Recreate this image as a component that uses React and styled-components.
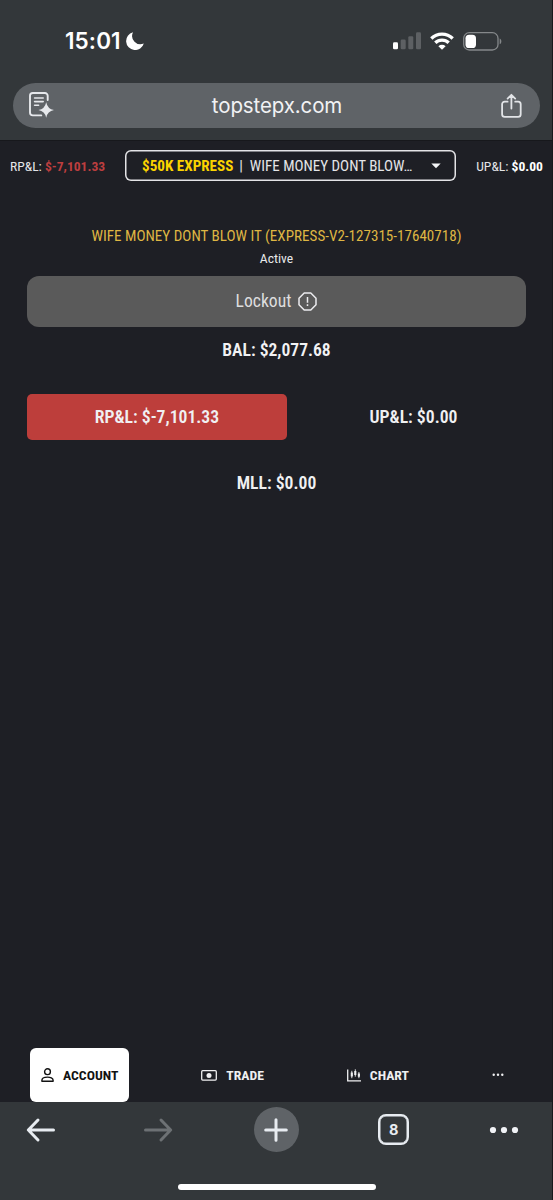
import React, { useState } from 'react'
import styled, { createGlobalStyle } from 'styled-components'

const GlobalStyle = createGlobalStyle`
  * { box-sizing: border-box; }
  body { margin: 0; background: #1e1f25; }
  button { font: inherit; color: inherit; background: none; border: 0; padding: 0; margin: 0; display: flex; align-items: center; }
  svg { display: block; flex: none; }
`

const account = {
  plan: '$50K EXPRESS',
  name: 'WIFE MONEY DONT BLOW IT',
  id: 'EXPRESS-V2-127315-17640718',
  status: 'Active',
  bal: '$2,077.68',
  rpl: '$-7,101.33',
  upl: '$0.00',
  mll: '$0.00'
}

// Long account names don't fit in the select.
const shorten = (name, max = 20) => (name.length > max ? name.slice(0, max) + '…' : name)

// Status bar icons
const MoonIcon = () => (
  <svg width="18" height="18" viewBox="0 0 18 18" fill="#fff">
    <path d="M7 0.3A9 9 0 1 0 17.800 11.500A8.300 8.300 0 0 1 7 0.300Z" />
  </svg>
)
const SignalIcon = () => (
  <svg width="28" height="18" viewBox="0 0 28 18" fill="#5d6063">
    <rect x="0" y="10.300" width="5" height="7" rx="1.300" fill="#fff" />
    <rect x="7.700" y="7.500" width="5" height="9.800" rx="1.300" />
    <rect x="15.300" y="4.200" width="5" height="13.100" rx="1.300" />
    <rect x="23" y="0.300" width="5" height="17" rx="1.300" />
  </svg>
)
const WifiIcon = () => (
  <svg width="24" height="18" viewBox="0 0 24 18" fill="none" stroke="#fff" strokeWidth="3.300">
    <path d="M1.300 6.500a15.300 15.300 0 0 1 21.400 0" />
    <path d="M5.300 10.800a9.600 9.600 0 0 1 13.400 0" />
    <path d="M12 17.800l-3.600-3.600a5.300 5.300 0 0 1 7.200 0z" fill="#fff" stroke="none" />
  </svg>
)
const BatteryIcon = () => (
  <svg width="39" height="19" viewBox="0 0 39 19">
    <rect x="0.700" y="0.700" width="34.300" height="17.300" rx="5.600" fill="none" stroke="#85888a" strokeWidth="1.300" />
    <rect x="2.500" y="2.700" width="10.500" height="13.300" rx="3.600" fill="#fff" />
    <path d="M36.700 6.500c2.200.8 2.200 5 0 5.800z" fill="#85888a" />
  </svg>
)

// Browser icons
const ReaderIcon = () => (
  <svg width="26" height="27" viewBox="0 0 26 27" fill="none" stroke="#e6e8ec" strokeWidth="1.900" strokeLinecap="round">
    <path d="M18.700 8V3.800a2.800 2.800 0 0 0-2.800-2.800H3.800A2.800 2.800 0 0 0 1 3.800v16.800a2.800 2.800 0 0 0 2.800 2.800h8.500" />
    <path d="M5.600 6h8.600M5.600 9.600h8.600M5.600 13.300h4" strokeWidth="1.600" />
    <path d="M17.200 10.300q1.300 6.700 7.800 7.800-6.500 1.100-7.800 7.700-1.300-6.600-7.800-7.700 6.500-1.100 7.800-7.800z" fill="#e6e8ec" stroke="none" />
  </svg>
)
const ShareIcon = () => (
  <svg width="21" height="26" viewBox="0 0 21 26" fill="none" stroke="#e2e4e7" strokeWidth="1.800" strokeLinecap="round" strokeLinejoin="round">
    <path d="M6.600 8.700H3.700A2.600 2.600 0 0 0 1.100 11.300v10a2.600 2.600 0 0 0 2.600 2.600h13.400a2.600 2.600 0 0 0 2.600-2.600v-10a2.600 2.600 0 0 0-2.600-2.600h-2.900M10.400 15.500V2M6.600 5.600l3.800-3.800 3.800 3.800" />
  </svg>
)
const ArrowIcon = ({ forward }) => (
  <svg width="30" height="26" viewBox="0 0 30 26" fill="none" stroke={forward ? '#6d7174' : '#e8ecf1'} strokeWidth="3" strokeLinecap="round" strokeLinejoin="round">
    <path d={forward ? 'M2.500 13h25M18 3l9.700 10L18 23' : 'M27.500 13h-25M12 3L2.300 13 12 23'} />
  </svg>
)
const PlusIcon = () => (
  <svg width="24" height="24" viewBox="0 0 24 24" stroke="#e8ecf1" strokeWidth="3" strokeLinecap="round">
    <path d="M1.700 12h20.600M12 1.700v20.600" />
  </svg>
)
const MoreIcon = () => (
  <svg width="30" height="8" viewBox="0 0 30 8" fill="#f1f3f6">
    <circle cx="4" cy="4" r="3.100" /><circle cx="15" cy="4" r="3.100" /><circle cx="26" cy="4" r="3.100" />
  </svg>
)

// Platform icons
const CaretIcon = () => (
  <svg width="10" height="6" viewBox="0 0 10 6" fill="#f4f5f7"><path d="M0.300 0.500h9.400L5 5.300z" /></svg>
)
const AlertIcon = () => (
  <svg width="19" height="19" viewBox="0 0 19 19" fill="none" stroke="#ececef" strokeWidth="1.500" strokeLinejoin="round">
    <path d="M6.200 1h6.600L18 6.200v6.600L12.800 18H6.200L1 12.800V6.200z" />
    <path d="M9.500 5v5.700M9.500 12.300v1.800" />
  </svg>
)
const PersonIcon = () => (
  <svg width="13" height="14" viewBox="0 0 13 14" fill="none" stroke="currentColor" strokeWidth="1.400">
    <circle cx="6.500" cy="3.700" r="2.900" />
    <path d="M0.900 13.200v-0.900c0-4.200 11.200-4.200 11.200 0v0.900z" strokeLinejoin="round" />
  </svg>
)
const CashIcon = () => (
  <svg width="16" height="11" viewBox="0 0 16 11" fill="none" stroke="currentColor" strokeWidth="1.300">
    <rect x="0.700" y="0.700" width="14.600" height="9.400" rx="1" />
    <circle cx="8" cy="5.400" r="2.500" fill="currentColor" stroke="none" />
  </svg>
)
const CandlesIcon = () => (
  <svg width="14" height="13" viewBox="0 0 14 13" fill="none" stroke="currentColor">
    <path d="M0.700 0.500v11.400H14" strokeWidth="1.300" />
    <path d="M4.800 1.800v7.400M8.300 0.300v7.400M11.900 3v6.200" strokeWidth="0.900" />
    <path d="M4.800 3.500v4M8.300 2v4M11.900 4.500v3.200" strokeWidth="2.100" />
  </svg>
)
const DotsIcon = () => (
  <svg width="12" height="4" viewBox="0 0 12 4" fill="currentColor">
    <circle cx="1.700" cy="1.700" r="1.200" /><circle cx="6" cy="1.700" r="1.200" /><circle cx="10.300" cy="1.700" r="1.200" />
  </svg>
)

const tabs = [
  { label: 'ACCOUNT', icon: PersonIcon },
  { label: 'TRADE', icon: CashIcon },
  { label: 'CHART', icon: CandlesIcon },
  { label: '', icon: DotsIcon }
]

const App = () => {
  const [active, setActive] = useState('ACCOUNT')

  return (
    <Screen>
      <GlobalStyle />
      <BrowserTop>
        <StatusBar>
          <Time>15:01</Time>
          <MoonIcon />
          <StatusIcons><SignalIcon /><WifiIcon /><BatteryIcon /></StatusIcons>
        </StatusBar>
        <AddressBar>
          <ReaderIcon />
          <Address>topstepx.com</Address>
          <ShareIcon />
        </AddressBar>
      </BrowserTop>
      <Platform>
        <Header>
          <Pnl>RP&amp;L: <PnlValue $loss>{account.rpl}</PnlValue></Pnl>
          <AccountSelect>
            <Plan>{account.plan}</Plan>
            <AccountName>| &nbsp;{shorten(account.name)}</AccountName>
            <CaretIcon />
          </AccountSelect>
          <Pnl>UP&amp;L: <PnlValue>{account.upl}</PnlValue></Pnl>
        </Header>
        <Main>
          <Title>{account.name} ({account.id})</Title>
          <Status>{account.status}</Status>
          <Lockout>Lockout <AlertIcon /></Lockout>
          <Balance>BAL: {account.bal}</Balance>
          <StatRow>
            <Stat $loss>RP&amp;L: {account.rpl}</Stat>
            <Stat>UP&amp;L: {account.upl}</Stat>
          </StatRow>
          <Stat>MLL: {account.mll}</Stat>
        </Main>
        <TabBar>
          {tabs.map(({ label, icon: Icon }) => (
            <Tab key={label} $active={active === label} onClick={() => setActive(label)}>
              <Icon />{label && <span>{label}</span>}
            </Tab>
          ))}
        </TabBar>
      </Platform>
      <BrowserBottom>
        <NavRow>
          <NavButton><ArrowIcon /></NavButton>
          <NavButton><ArrowIcon forward /></NavButton>
          <NavButton $round><PlusIcon /></NavButton>
          <NavButton><TabCount>8</TabCount></NavButton>
          <button><MoreIcon /></button>
        </NavRow>
        <HomeIndicator />
      </BrowserBottom>
    </Screen>
  )
}

const Screen = styled.div`
  width: 553px; height: 1200px; display: flex; flex-direction: column; border-right: 1px solid #17191c;
  font-family: Inter, "Liberation Sans", sans-serif; color: #fff; overflow: hidden;`

// Browser chrome, top
const BrowserTop = styled.header`height: 140px; background: #33373a;`
const StatusBar = styled.div`
  height: 83px; padding: 0 50px 1px 65px; display: flex; align-items: center;`
const Time = styled.span`font-size: 22.500px; font-weight: 600; width: 61px; letter-spacing: 0.1px; padding-bottom: 1px;`
const StatusIcons = styled.div`margin-left: auto; display: flex; align-items: center; gap: 9px;`
const AddressBar = styled.div`
  height: 45px; margin: 0 12px 0 13px; padding: 0 18px 0 16px; border-radius: 23px; background: #5f6367;
  display: flex; align-items: center; justify-content: space-between;`
const Address = styled.span`font-size: 20.500px; letter-spacing: -0.120px; color: #f1f2f4; padding-right: 2px;`

// Trading platform
const Platform = styled.div`
  flex: 1; min-height: 0; display: flex; flex-direction: column; background: #1e1f25;
  font-family: "Roboto Condensed", Roboto, sans-serif; font-stretch: 75%; border-top: 1px solid #17181c;`
const Header = styled.div`
  height: 50px; padding: 0 9px 1px 10px; display: flex; align-items: center; justify-content: space-between;`
const Pnl = styled.span`font-size: 13.600px; width: 96px; color: #e4e5e8; white-space: nowrap; &:last-child { width: auto; }`
const PnlValue = styled.b`color: ${p => (p.$loss ? '#bd3e3f' : '#fff')};`
const AccountSelect = styled.button`
  && { width: 331px; height: 31px; padding: 0 15px 0 17px; margin-left: -1px; border-radius: 6px;
  box-shadow: inset 0 0 0 1.500px #e4e4e7; }`
const Plan = styled.b`color: #fbd300; font-size: 15.100px; margin-right: 6px; white-space: nowrap;`
const AccountName = styled.span`
  font-size: 15px; color: #e4e5e8; margin-right: auto; white-space: nowrap;`
const Main = styled.main`
  flex: 1; padding: 34px 26px 0 27px; display: flex; flex-direction: column; align-items: center;`
const Title = styled.h1`margin: 0; font-size: 15.100px; font-weight: 400; line-height: 22px; color: #dfb643; white-space: nowrap;`
const Status = styled.div`height: 24px; font-size: 13.600px; line-height: 23px; color: #e8e8ea;`
const Lockout = styled.button`
  && { width: 499px; height: 51px; margin-top: 5px; padding-bottom: 1px; border-radius: 12px; background: #5a5a5a;
  justify-content: center; gap: 7px; font-size: 17.600px; color: #dededf; }`
const Balance = styled.div`height: 46px; margin-bottom: 21px; line-height: 46px; font-size: 17.600px; font-weight: 600; color: #f2f2f4;`
const StatRow = styled.div`width: 100%; display: flex; margin-bottom: 20px;`
const Stat = styled.div`
  flex: 0 0 auto; height: 46px; line-height: 46px; width: ${p => (p.$loss ? 260 : 253)}px; text-align: center;
  border-radius: 5px; font-size: 17.700px; font-weight: 600; color: #f0f0f2; background: ${p => (p.$loss ? '#bd3e3b' : 'none')};`
const TabBar = styled.nav`
  height: 54px; padding: 0 37px 0 30px; display: flex; justify-content: space-between;`
const Tab = styled.button`
  && { height: 54px; padding: 0 11px; gap: 9px; border-radius: 6px; font-size: 13.700px; font-weight: 700;
  color: ${p => (p.$active ? '#121212' : '#efeff1')}; background: ${p => (p.$active ? '#fff' : 'none')}; }`

// Browser chrome, bottom
const BrowserBottom = styled.footer`
  height: 98px; background: #33373a; display: flex; flex-direction: column; align-items: center; justify-content: space-between;
  padding-bottom: 10px;`
const NavRow = styled.div`
  width: 100%; height: 55px; padding: 0 33px 0 18px; display: flex; align-items: center; justify-content: space-between;`
const NavButton = styled.button`
  && { width: 45px; height: 45px; border-radius: 50%; justify-content: center; background: ${p => (p.$round ? '#5f6367' : 'none')};
  &:nth-child(-n+4) { margin-right: 1px; } }`
const TabCount = styled.span`
  width: 31px; height: 31px; border: 2.500px solid #e8ecf1; border-radius: 8px; display: flex; align-items: center;
  justify-content: center; font-size: 14.500px; font-weight: 700; color: #e8ecf1; box-shadow: inset 0 0 0 0.500px #e8ecf1;`
const HomeIndicator = styled.div`width: 198px; height: 6px; margin-left: 1px; border-radius: 3px; background: #fff;`

export default App
